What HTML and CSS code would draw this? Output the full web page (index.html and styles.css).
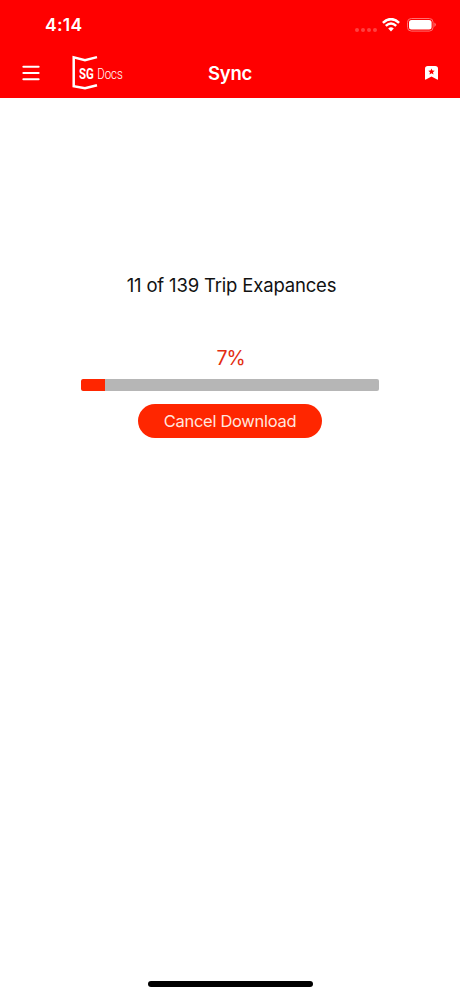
FILE: index.html
```html
<!DOCTYPE html>
<html lang="en">
<head>
<meta charset="utf-8">
<title>Sync</title>
<link rel="stylesheet" href="styles.css">
</head>
<body>
<div class="screen">
  <header class="header">
    <div class="status">
      <span class="time">4:14</span>
      <div class="indicators">
        <span class="cellular"><i></i><i></i><i></i><i></i></span>
        <svg class="wifi" width="18" height="14" viewBox="0 0 18 14" fill="none" stroke="#fff" stroke-width="2.5">
          <path d="M.9 4.9Q9-2.7 17.1 4.9M3.8 7.9Q9 3.2 14.2 7.9"/>
          <path d="M9 13.4 6.2 10.5Q9 8.2 11.8 10.5Z" fill="#fff" stroke="none"/>
        </svg>
        <svg class="battery" width="30" height="14" viewBox="0 0 30 14">
          <rect x=".5" y=".5" width="25.6" height="12.6" rx="3.8" fill="none" stroke="#ff7070"/>
          <rect x="2" y="2" width="22.6" height="9.6" rx="2.5" fill="#fff"/>
          <path d="M27.4 4.6q3 2.2 0 4.4z" fill="#ff7070"/>
        </svg>
      </div>
    </div>
    <nav class="nav">
      <svg class="menu" width="18" height="16" viewBox="0 0 18 16" stroke="#fff" stroke-width="2.1" stroke-linecap="round">
        <path d="M1.4 1.7h15.2M1.4 8h15.2M1.4 14.2h15.2"/>
      </svg>
      <div class="logo">
        <svg class="book" width="26" height="36" viewBox="0 0 26 36" fill="none" stroke="#fff" stroke-width="2.5">
          <path d="M25 2.1 13 5.1 1.7 2.3V31.2L13 33.3 25 30.2"/>
        </svg>
        <span class="brand"><b>SG</b><span class="docs">Docs</span></span>
      </div>
      <h1 class="title">Sync</h1>
      <svg class="bookmark" width="13" height="14" viewBox="0 0 13 14">
        <path d="M2.8 0h7.4Q13 0 13 2.8V13q0 1-.9.6L6.5 10.5.9 13.6Q0 14 0 13V2.8Q0 0 2.8 0Z" fill="#fff"/>
        <path d="m6.5 2.4.9 2.1 2.3.2-1.7 1.5.5 2.3-2-1.2-2 1.2.5-2.3-1.7-1.5 2.3-.2z" fill="red"/>
      </svg>
    </nav>
  </header>
  <main class="main">
    <p class="count">11 of 139 Trip Exapances</p>
    <p class="percent">7%</p>
    <div class="track"><div class="fill" style="width:8%"></div></div>
    <button class="cancel">Cancel Download</button>
  </main>
  <div class="home"></div>
</div>
</body>
</html>
```
FILE: styles.css
```css
* { box-sizing: border-box; }
body { margin: 0; background: #fff; font-family: Inter, "Liberation Sans", sans-serif; }
.screen { width: 460px; height: 996px; display: flex; flex-direction: column; }
.header { height: 98px; flex: none; background: red; color: #fff; }
.status { height: 50px; padding: 0 23px 0 45px; display: flex; justify-content: space-between; align-items: center; }
.time { font-size: 17.5px; font-weight: 600; line-height: 22px; letter-spacing: .3px; }
.indicators { display: flex; align-items: center; }
.cellular { display: flex; gap: 2px; margin: 9px 5px 0 0; }
.cellular i { width: 4px; height: 4px; border-radius: 50%; background: #ff4040; }
.wifi { margin-right: 7px; }
.nav { height: 48px; padding: 0 22px; display: grid; grid-template-columns: 50px 92px 132px 1fr; align-items: center; }
.menu { margin-bottom: 2px; }
.logo { display: flex; align-items: center; margin-bottom: 3px; }
.book { flex: none; }
.brand { margin: 2px 0 0 -19px; display: flex; gap: 4px; font-family: Roboto, sans-serif; font-size: 13.8px; line-height: 16px; white-space: nowrap; transform: scaleX(.83); transform-origin: left; }
.brand b { font-weight: 700; }
.docs { font-weight: 300; }
.title { margin: 0 0 2px; text-align: center; font-size: 18.5px; line-height: 24px; font-weight: 600; letter-spacing: -.2px; }
.bookmark { justify-self: end; margin-bottom: 2px; }
.main { flex: 1; display: flex; flex-direction: column; align-items: center; }
.count { margin: 175px 0 0 3px; font-size: 18.5px; line-height: 24px; letter-spacing: -.17px; color: #111; white-space: nowrap; }
.percent { margin: 49px 0 0 1px; font-size: 19.5px; line-height: 24px; letter-spacing: -1px; color: #e32c10; }
.track { margin-top: 9px; width: 298px; height: 12px; border-radius: 2px; background: #b6b6b6; overflow: hidden; }
.fill { height: 100%; border-radius: 2px 0 0 2px; background: #ff2600; }
.cancel { margin-top: 13px; width: 184px; height: 34px; padding: 0; border: 0; border-radius: 17px; background: #ff2600; color: #ffe5df; font-family: inherit; font-size: 16.5px; line-height: 20px; letter-spacing: -.3px; }
.home { flex: none; align-self: center; width: 165px; height: 6px; margin-bottom: 9px; border-radius: 3px; background: #000; }
```
